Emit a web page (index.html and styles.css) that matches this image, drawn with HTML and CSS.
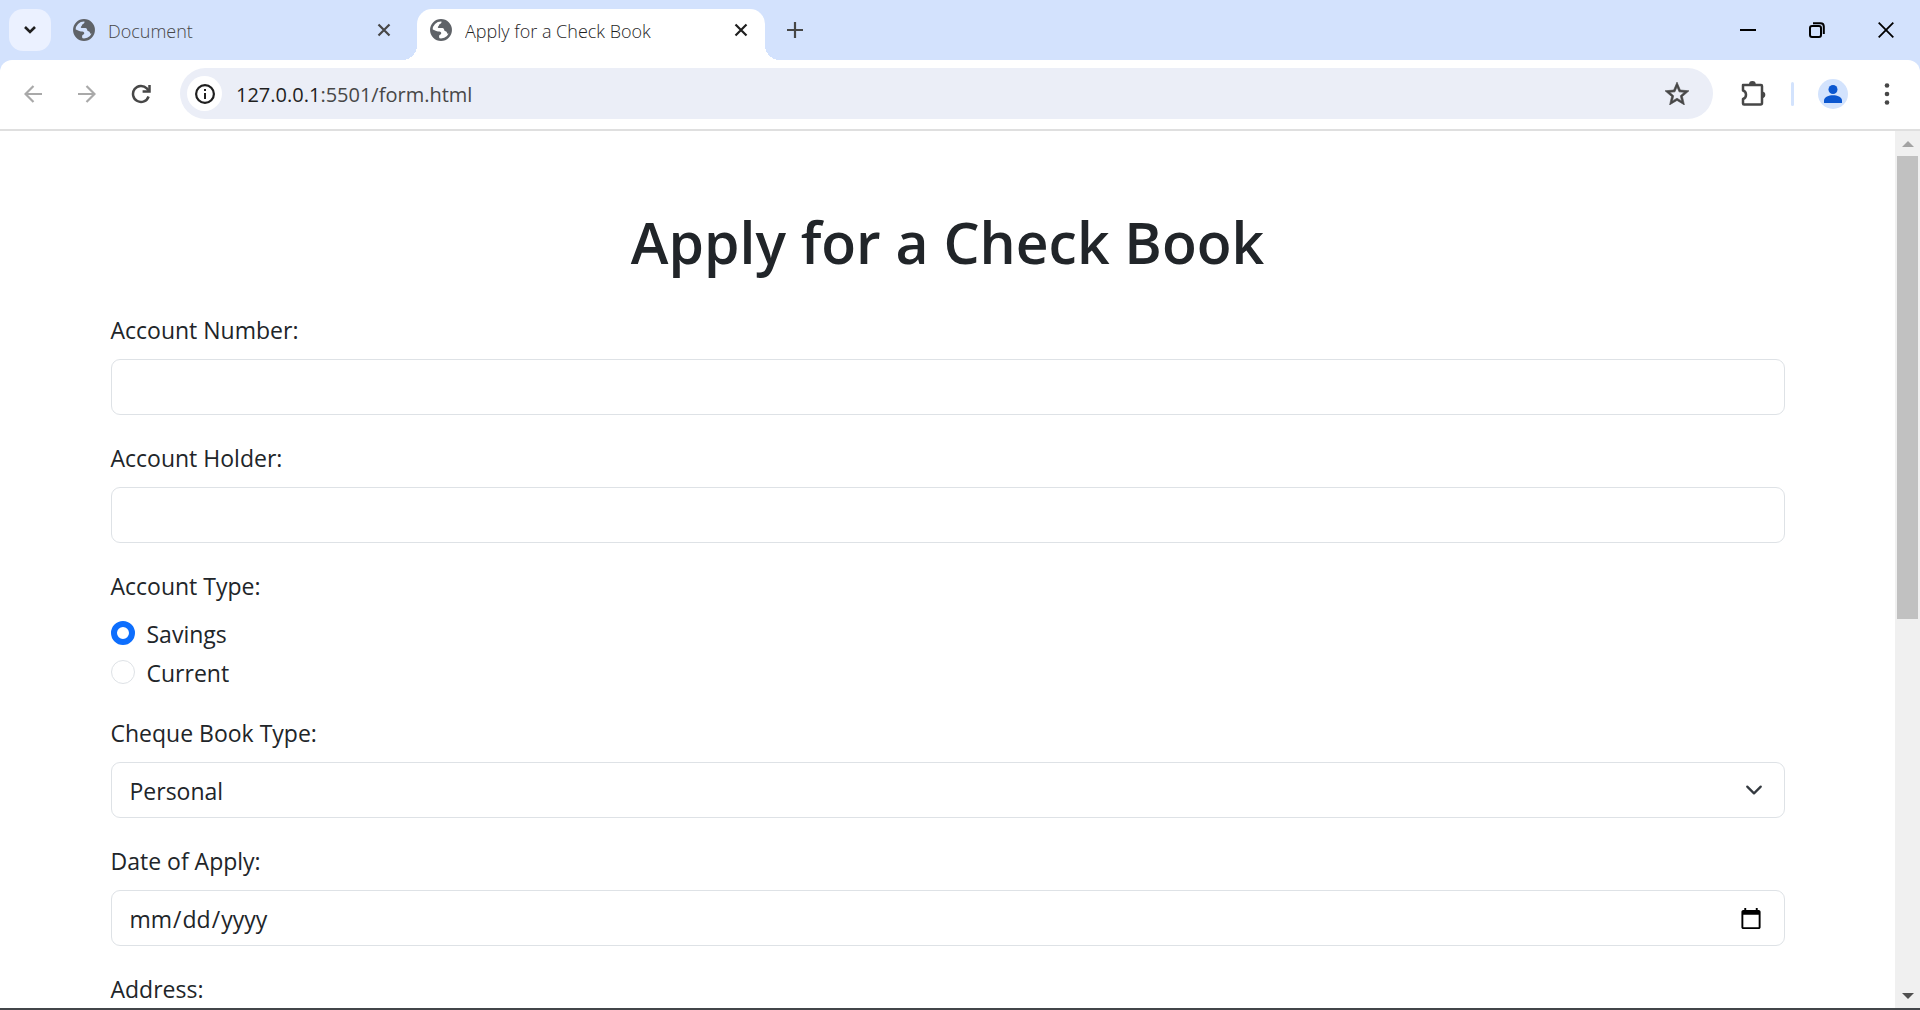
FILE: index.html
```html
<!DOCTYPE html>
<html lang="en">
<head>
<meta charset="utf-8">
<title>Apply for a Check Book</title>
<link rel="stylesheet" href="styles.css">
</head>
<body>
<svg class="sprite" aria-hidden="true">
  <symbol id="globe" viewBox="0 0 22 22">
    <circle cx="11" cy="11" r="9.7" fill="none" stroke="currentColor" stroke-width="2.5"/>
    <path fill="currentColor" d="M11.500 1.200V3C11.500 4.200 10.600 4.800 9.600 5.200C8.800 5.600 9.200 6.600 8.400 7.200C7.600 7.800 7.600 8.800 8.600 9H12.400C13.800 9 14 10 14.200 11C14.400 12.200 15.400 12.200 16.200 12.600C17 13 16.800 14.200 17.600 14.800L20 14.500C22.500 8 18.500 1.200 11.500 1.200Z"/>
    <path fill="currentColor" d="M1.200 9.800L6.200 12C7.200 12.600 8 12.400 9.200 12.400C10.800 12.400 11.400 13.400 11.200 14.600C11 15.800 9.600 15.600 9.200 16.600C8.800 17.600 9.600 18.400 9.200 20.600C4 20 .8 15 1.200 9.800Z"/>
  </symbol>
  <symbol id="cross" viewBox="0 0 14 14">
    <path d="M1.500 1.500L12.500 12.500M12.500 1.500L1.500 12.500" fill="none" stroke="currentColor" stroke-width="2.200"/>
  </symbol>
</svg>

<header class="browser">
  <div class="tabstrip">
    <button class="tab-search" type="button" aria-label="Search tabs">
      <svg width="14" height="10" viewBox="0 0 14 10"><path d="M2 2L7 7L12 2" fill="none" stroke="currentColor" stroke-width="2.600"/></svg>
    </button>
    <div class="tab">
      <svg class="favicon"><use href="#globe"/></svg>
      <span class="tab-title">Document</span>
      <button class="tab-close" type="button" aria-label="Close tab"><svg><use href="#cross"/></svg></button>
    </div>
    <div class="tab tab-active">
      <svg class="favicon"><use href="#globe"/></svg>
      <span class="tab-title">Apply for a Check Book</span>
      <button class="tab-close" type="button" aria-label="Close tab"><svg><use href="#cross"/></svg></button>
    </div>
    <button class="new-tab" type="button" aria-label="New tab">
      <svg width="16" height="16" viewBox="0 0 16 16"><path d="M8 0V16M0 8H16" stroke="currentColor" stroke-width="2.200"/></svg>
    </button>
    <div class="window-controls">
      <button type="button" aria-label="Minimize"><svg width="16" height="16" viewBox="0 0 16 16"><path d="M0 8H16" stroke="currentColor" stroke-width="2"/></svg></button>
      <button type="button" aria-label="Restore"><svg width="16" height="16" viewBox="0 0 16 16" fill="none" stroke="currentColor" stroke-width="2"><rect x="1" y="4" width="11" height="11" rx="2"/><path d="M4 1.200H11.500Q14.800 1.200 14.800 4.500V12"/></svg></button>
      <button type="button" aria-label="Close"><svg width="16" height="16" viewBox="0 0 16 16"><path d="M.7 .7L15.300 15.300M15.300 .7L.7 15.300" stroke="currentColor" stroke-width="1.800"/></svg></button>
    </div>
  </div>

  <div class="toolbar">
    <button class="tool tool-off" type="button" aria-label="Back"><svg width="18" height="18" viewBox="0 0 18 18"><path d="M18 9H2M9.500 1L1.500 9L9.500 17" fill="none" stroke="currentColor" stroke-width="2.200"/></svg></button>
    <button class="tool tool-off" type="button" aria-label="Forward"><svg width="18" height="18" viewBox="0 0 18 18"><path d="M0 9H16M8.500 1L16.500 9L8.500 17" fill="none" stroke="currentColor" stroke-width="2.200"/></svg></button>
    <button class="tool" type="button" aria-label="Reload"><svg width="20" height="20" viewBox="0 0 20 20" fill="none" stroke="currentColor" stroke-width="2.500"><path d="M17.600 12.500A8 8 0 1 1 15.800 4.400L18 6.800"/><path d="M18.500 1V7.600H11.600"/></svg></button>
    <div class="omnibox">
      <button class="site-info" type="button" aria-label="View site information"><svg width="20" height="20" viewBox="0 0 20 20"><circle cx="10" cy="10" r="8.900" fill="none" stroke="currentColor" stroke-width="2.200"/><path d="M10 9V15M10 5V7" stroke="currentColor" stroke-width="2"/></svg></button>
      <span class="url"><b>127.0.0.1</b>:5501/form.html</span>
      <button class="tool" type="button" aria-label="Bookmark this tab"><svg width="24" height="23" viewBox="2 2 20 19"><path fill="currentColor" stroke="currentColor" stroke-width=".5" d="M22 9.240l-7.190-.62L12 2 9.190 8.630 2 9.240l5.460 4.730L5.820 21 12 17.270 18.180 21l-1.630-7.030L22 9.240zM12 15.400l-3.760 2.270 1-4.280-3.320-2.880 4.380-.38L12 6.100l1.710 4.040 4.380.38-3.320 2.880 1 4.280L12 15.400z"/></svg></button>
    </div>
    <button class="tool extensions" type="button" aria-label="Extensions"><svg width="25" height="25" viewBox="0 0 25 25"><path d="M2 4H20Q21 4 21 5V22Q21 23.500 19.500 23.500H3Q2 23.500 2 22.500V18Q5 17 5 13.700T2 9.500Z" fill="none" stroke="currentColor" stroke-width="2.500" stroke-linejoin="round"/><path d="M8 3.500A3.400 3.400 0 0 1 14.800 3.500ZM21.500 10.500A3.400 3.400 0 0 1 21.500 17.200Z" fill="currentColor"/></svg></button>
    <span class="divider"></span>
    <button class="profile" type="button" aria-label="Profile"><svg width="18" height="18" viewBox="0 0 18 18" fill="currentColor"><circle cx="9" cy="4.500" r="4.500"/><path d="M0 18V15.500C0 12 5 10.200 9 10.200S18 12 18 15.500V18Z"/></svg></button>
    <button class="tool" type="button" aria-label="Menu"><svg width="6" height="22" viewBox="0 0 6 22" fill="currentColor"><circle cx="3" cy="2.500" r="2.300"/><circle cx="3" cy="11" r="2.300"/><circle cx="3" cy="19.500" r="2.300"/></svg></button>
  </div>
</header>

<div class="viewport">
  <main class="page">
    <form class="container">
      <h1>Apply for a Check Book</h1>
      <div class="field">
        <label for="number">Account Number:</label>
        <input class="control" type="text" id="number">
      </div>
      <div class="field">
        <label for="holder">Account Holder:</label>
        <input class="control" type="text" id="holder">
      </div>
      <div class="field field-checks" role="radiogroup" aria-labelledby="type-label">
        <span id="type-label">Account Type:</span>
        <div class="checks">
          <div class="check"><input type="radio" name="type" id="savings" checked><label for="savings">Savings</label></div>
          <div class="check"><input type="radio" name="type" id="current"><label for="current">Current</label></div>
        </div>
      </div>
      <div class="field">
        <label for="book">Cheque Book Type:</label>
        <div class="select-wrap">
          <select class="control" id="book"><option>Personal</option></select>
          <svg class="chevron" width="18" height="18" viewBox="0 0 16 16" aria-hidden="true"><path d="M2 5l6 6 6-6" fill="none" stroke="#343a40" stroke-width="2" stroke-linecap="round" stroke-linejoin="round"/></svg>
        </div>
      </div>
      <div class="field">
        <label for="date">Date of Apply:</label>
        <input class="control" type="date" id="date">
      </div>
      <div class="field">
        <label for="address">Address:</label>
        <textarea class="control" id="address"></textarea>
      </div>
    </form>
  </main>
  <div class="scrollbar" aria-hidden="true">
    <span class="arrow arrow-up"></span>
    <div class="track"><div class="thumb"></div></div>
    <span class="arrow arrow-down"></span>
  </div>
</div>
</body>
</html>
```

FILE: styles.css
```css
*, *::before, *::after { box-sizing: border-box; }

body {
  margin: 0;
  height: 100vh;
  display: flex;
  flex-direction: column;
  overflow: hidden;
  background: #fff;
  border-bottom: 2px solid #43464a;
  color: #212529;
  font-family: "Open Sans", "Noto Sans", sans-serif;
  font-size: 23px;
  line-height: 38px;
}

button {
  display: flex;
  align-items: center;
  justify-content: center;
  flex: none;
  padding: 0;
  border: 0;
  background: none;
  color: inherit;
}

.sprite { position: absolute; width: 0; height: 0; }

/* Browser frame */
.browser { flex: none; background: #d3e2fd; color: #474747; }

.tabstrip {
  display: flex;
  align-items: flex-start;
  gap: 9px;
  height: 60px;
  padding: 9px 0 0 9px;
}

.tab-search {
  width: 42px;
  height: 42px;
  border-radius: 14px;
  background: #ebf1ff;
  color: #1f1f1f;
}

.tab {
  display: flex;
  align-items: center;
  flex: 0 1 348px;
  height: 51px;
  padding: 0 17px 9px 13px;
}

.tab-active {
  position: relative;
  border-radius: 15px 15px 0 0;
  background: #fff;
  color: #1f1f1f;
}

.tab-active::before,
.tab-active::after {
  content: "";
  position: absolute;
  bottom: 0;
  width: 15px;
  height: 15px;
}
.tab-active::before { right: 100%; background: radial-gradient(circle at 0 0, transparent 15px, #fff 15px); }
.tab-active::after { left: 100%; background: radial-gradient(circle at 100% 0, transparent 15px, #fff 15px); }

.favicon { flex: none; width: 22px; height: 22px; color: #5f6368; }

.tab-title {
  flex: 1;
  min-width: 0;
  margin-left: 13px;
  padding-top: 2px;
  overflow: hidden;
  white-space: nowrap;
  font-size: 18px;
  font-weight: 300;
  line-height: 26px;
}

.tab-close svg { width: 14px; height: 14px; }

.new-tab { width: 42px; height: 42px; }

.window-controls { display: flex; margin-left: auto; color: #000; }
.window-controls button { width: 69px; height: 42px; }

.toolbar {
  display: flex;
  align-items: center;
  height: 71px;
  padding: 0 12px 2px 12px;
  border-bottom: 2px solid #dfdfdf;
  border-radius: 12px 12px 0 0;
  background: #fff;
}

.tool { width: 42px; height: 42px; margin-right: 12px; }
.tool-off { color: #a9a9a9; }

.omnibox {
  display: flex;
  align-items: center;
  flex: 1;
  min-width: 0;
  height: 51px;
  margin-left: 6px;
  padding: 0 3px 0 7px;
  border-radius: 26px;
  background: #ebeef7;
}

.site-info { width: 35px; height: 35px; border-radius: 50%; background: #fff; color: #1f1f1f; }

.url { flex: 1; margin-left: 14px; padding-top: 2px; font-size: 20px; line-height: 28px; }
.url b { font-weight: 400; color: #1f1f1f; }

.extensions { margin: 0 17px 0 19px; }
.divider { flex: none; width: 3px; height: 24px; border-radius: 2px; background: #d3e3fd; }
.profile { width: 30px; height: 30px; margin: 0 18px 0 24px; border-radius: 50%; background: #d3e3fd; color: #0b57d0; }
.profile + .tool { margin-right: 0; }

/* Page */
.viewport { flex: 1; min-height: 0; display: flex; }
.page { flex: 1; min-width: 0; overflow: hidden; }
.container { max-width: 1710px; margin: 0 auto; padding: 75px 18px; }

h1 {
  margin: 0 0 33px;
  font-size: 57px;
  font-weight: 600;
  line-height: 72px;
  text-align: center;
}

.field { display: flex; flex-direction: column; gap: 10px; margin-bottom: 24px; }
.field-checks { margin-bottom: 22px; }

.control {
  display: block;
  width: 100%;
  height: 56px;
  padding: 10px 18px 8px;
  border: 1px solid #dee2e6;
  border-radius: 9px;
  background: #fff;
  color: inherit;
  font: inherit;
  line-height: 36px;
}

textarea.control { height: 92px; resize: none; }
select.control { appearance: none; }
input[type="date"] { padding-right: 21px; padding-left: 17px; }
.control::-webkit-calendar-picker-indicator { width: 24px; height: 24px; padding: 0; }

.select-wrap { display: grid; align-items: center; }
.select-wrap > * { grid-area: 1 / 1; }
.chevron { justify-self: end; margin-right: 22px; pointer-events: none; }

.checks { display: flex; flex-direction: column; gap: 1px; }
.check { display: flex; align-items: flex-start; gap: 12px; }
.check input {
  appearance: none;
  flex: none;
  width: 24px;
  height: 24px;
  margin: 6px 0 0;
  border: 1px solid #dee2e6;
  border-radius: 50%;
}
.check input:checked { border: 6px solid #0d6efd; }

/* Scrollbar */
.scrollbar { flex: none; display: flex; flex-direction: column; width: 25px; background: #f0f0f0; }
.arrow { display: flex; align-items: center; justify-content: center; height: 25px; }
.arrow::before { content: ""; border: solid transparent; border-width: 0 6px 6px; }
.arrow-up::before { border-bottom-color: #a3a3a3; }
.arrow-down::before { border-width: 6px 6px 0; border-top-color: #505050; }
.track { flex: 1; padding: 0 2px; }
.thumb { height: 56%; background: #c1c1c1; }
```
